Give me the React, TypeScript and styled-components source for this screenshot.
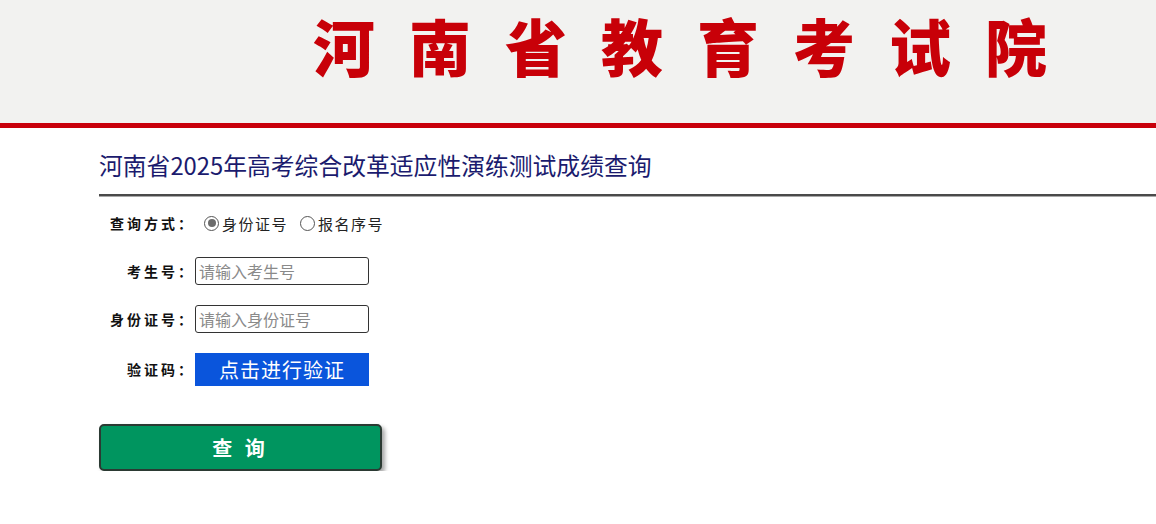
import React, { useState } from 'react';
import styled, { createGlobalStyle } from 'styled-components';

const GlobalStyle = createGlobalStyle`
  body {
    margin: 0;
    background: #fff;
    font-family: 'Noto Sans CJK SC', 'Noto Sans', sans-serif;
  }
`;

const Header = styled.div`
  height: 128px;
  box-sizing: border-box;
  background: #f2f2f0;
  border-bottom: 5px solid #c8000b;
  padding: 14px 0 0 313px;
`;

const SiteName = styled.h1`
  margin: 0;
  font-size: 62px;
  line-height: 62px;
  font-weight: 900;
  color: #c80008;
  letter-spacing: 34px;
  white-space: nowrap;
`;

const Main = styled.div`
  padding-left: 99px;
`;

const PageTitle = styled.h2`
  margin: 0;
  padding: 21px 0 13px;
  font-size: 23.8px;
  line-height: 32px;
  font-weight: 400;
  color: #1b1b6e;
  border-bottom: 2px solid #4a4a4a;
  box-shadow: 0 1px 0 #a8a8a8;
`;

const Form = styled.div`
  display: flex;
  flex-direction: column;
  gap: 14px;
  padding-top: 10px;
`;

const Row = styled.div<{ $offset?: number }>`
  display: flex;
  align-items: center;
  height: 34px;
  margin-top: ${(p) => p.$offset ?? 0}px;
`;

const Label = styled.span`
  width: 96px;
  flex-shrink: 0;
  text-align: right;
  font-size: 14px;
  font-weight: 700;
  letter-spacing: 3px;
  color: #111;
`;

const RadioGroup = styled.div`
  display: flex;
  align-items: center;
  gap: 12px;
  padding-left: 9px;
`;

const RadioOption = styled.label`
  display: flex;
  align-items: center;
  gap: 3px;
  font-size: 15px;
  letter-spacing: 1.5px;
  color: #222;
  cursor: pointer;
`;

const RadioDot = styled.span<{ $checked: boolean }>`
  width: 13px;
  height: 13px;
  border-radius: 50%;
  border: 1px solid #555;
  box-sizing: content-box;
  display: flex;
  align-items: center;
  justify-content: center;
  &::after {
    content: '';
    width: 8px;
    height: 8px;
    border-radius: 50%;
    background: ${(p) => (p.$checked ? '#6b6b6b' : 'transparent')};
  }
`;

const TextInput = styled.input`
  width: 174px;
  height: 28px;
  box-sizing: border-box;
  border: 1px solid #333;
  border-radius: 3px;
  padding: 0 3px;
  font-family: inherit;
  font-size: 16px;
  color: #222;
  outline: none;
  &::placeholder {
    color: #8a8a8a;
  }
`;

const VerifyButton = styled.button`
  width: 174px;
  height: 33px;
  border: none;
  background: #0a55dc;
  color: #fff;
  font-family: inherit;
  font-size: 20px;
  letter-spacing: 1px;
  padding: 0;
  cursor: pointer;
`;

const QueryButton = styled.button`
  margin-top: 38px;
  width: 283px;
  height: 47px;
  box-sizing: border-box;
  background: #00955f;
  border: 2px solid #2b3a33;
  border-radius: 5px;
  box-shadow: 3px 3px 4px rgba(0, 0, 0, 0.35);
  color: #fff;
  font-family: inherit;
  font-size: 20px;
  font-weight: 700;
  letter-spacing: 4px;
  cursor: pointer;
`;

const App = () => {
  const [mode, setMode] = useState<'id' | 'reg'>('id');

  return (
    <>
      <GlobalStyle />
      <Header>
        <SiteName>河南省教育考试院</SiteName>
      </Header>
      <Main>
        <PageTitle>河南省2025年高考综合改革适应性演练测试成绩查询</PageTitle>
        <Form>
          <Row>
            <Label>查询方式：</Label>
            <RadioGroup>
              <RadioOption onClick={() => setMode('id')}>
                <RadioDot $checked={mode === 'id'} />
                身份证号
              </RadioOption>
              <RadioOption onClick={() => setMode('reg')}>
                <RadioDot $checked={mode === 'reg'} />
                报名序号
              </RadioOption>
            </RadioGroup>
          </Row>
          <Row>
            <Label>考生号：</Label>
            <TextInput type='text' placeholder='请输入考生号' />
          </Row>
          <Row>
            <Label>身份证号：</Label>
            <TextInput type='text' placeholder='请输入身份证号' />
          </Row>
          <Row $offset={2}>
            <Label>验证码：</Label>
            <VerifyButton>点击进行验证</VerifyButton>
          </Row>
        </Form>
        <QueryButton>查 询</QueryButton>
      </Main>
    </>
  );
};

export default App;
